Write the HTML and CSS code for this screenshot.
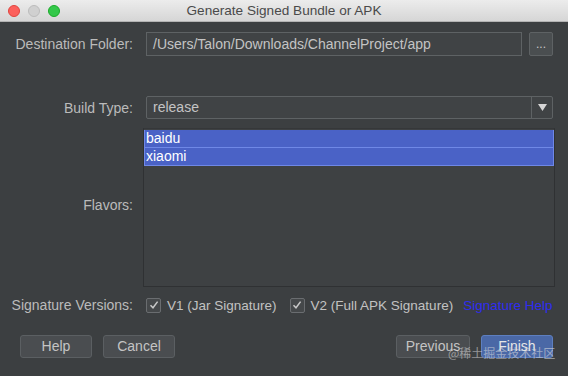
FILE: index.html
```html
<!DOCTYPE html>
<html>
<head>
<meta charset="utf-8">
<link rel="stylesheet" href="styles.css">
</head>
<body>
<div class="window">
  <div class="titlebar">
    <div class="lights">
      <span class="light red"></span>
      <span class="light gray"></span>
      <span class="light green"></span>
    </div>
    <div class="title">Generate Signed Bundle or APK</div>
    <div class="spacer"></div>
  </div>
  <div class="content">
    <div class="row row-dest">
      <div class="label">Destination Folder:</div>
      <div class="field path">/Users/Talon/Downloads/ChannelProject/app</div>
      <div class="browse">...</div>
    </div>
    <div class="row row-build">
      <div class="label">Build Type:</div>
      <div class="combo">
        <div class="combo-text">release</div>
        <div class="combo-arrow"><svg width="9" height="7" viewBox="0 0 9 7"><path d="M0 0H9L4.5 7Z" fill="#d6d6d6"/></svg></div>
      </div>
    </div>
    <div class="row row-flavors">
      <div class="label">Flavors:</div>
      <div class="list">
        <div class="item selected">baidu</div>
        <div class="item selected">xiaomi</div>
      </div>
    </div>
    <div class="row row-sig">
      <div class="label">Signature Versions:</div>
      <div class="checks">
        <label class="check"><span class="box"><svg width="12" height="12" viewBox="0 0 12 12"><path d="M2.5 6.2L5 8.8L9.6 2.6" fill="none" stroke="#c8c8c8" stroke-width="1.5"/></svg></span>V1 (Jar Signature)</label>
        <label class="check"><span class="box"><svg width="12" height="12" viewBox="0 0 12 12"><path d="M2.5 6.2L5 8.8L9.6 2.6" fill="none" stroke="#c8c8c8" stroke-width="1.5"/></svg></span>V2 (Full APK Signature)</label>
        <span class="link">Signature Help</span>
      </div>
    </div>
    <div class="buttons">
      <div class="group">
        <div class="btn">Help</div>
        <div class="btn">Cancel</div>
      </div>
      <div class="group">
        <div class="btn btn-prev">Previous</div>
        <div class="btn primary">Finish</div>
      </div>
    </div>
  </div>
  <div class="watermark">@稀土掘金技术社区</div>
</div>
</body>
</html>
```

FILE: styles.css
```css
* { box-sizing: border-box; }
html, body { margin: 0; padding: 0; }
body {
  width: 568px;
  height: 376px;
  overflow: hidden;
  background: #3c3f41;
  font-family: "Liberation Sans", Arial, sans-serif;
  font-size: 14px;
  color: #bbbbbb;
}
.window { position: relative; width: 568px; height: 376px; background: #3c3f41; }
.titlebar {
  height: 22px;
  background: linear-gradient(#ececec, #d6d6d6);
  border-bottom: 1px solid #b3b3b3;
  display: flex;
  align-items: center;
}
.lights { display: flex; gap: 8px; padding-left: 8px; width: 70px; flex: none; }
.spacer { width: 70px; flex: none; }
.light { width: 12px; height: 12px; border-radius: 50%; display: block; }
.light.red { background: #fc605c; border: 1px solid #e0443e; }
.light.gray { background: #d0d0d0; border: 1px solid #bcbcbc; }
.light.green { background: #34c84a; border: 1px solid #1aab29; }
.title {
  flex: 1;
  text-align: center;
  color: #4a4a4a;
  font-size: 13.6px;
}
.content { padding: 0 15px 0 0; }
.row { display: flex; align-items: center; }
.label { width: 133px; text-align: right; flex: none; margin-right: 13px; position: relative; white-space: nowrap; }
.row-dest { margin-top: 10px; height: 24px; }
.field {
  height: 24px;
  flex: 1;
  border: 1px solid #5e6264;
  background: #404345;
  padding: 0 6px;
  line-height: 22px;
  color: #c4c4c4;
}
.browse {
  width: 24px; height: 24px;
  margin-left: 7px;
  border: 1px solid #5e6264;
  border-radius: 2px;
  background: #4a4e50;
  color: #c8c8c8;
  text-align: center;
  line-height: 22px;
  font-size: 12px;
}
.row-build { margin-top: 40px; height: 23px; }
.combo {
  flex: 1; height: 23px;
  display: flex;
  border: 1px solid #5e6264;
  border-radius: 2px;
  background: #404345;
}
.combo-text { flex: 1; padding: 0 6px; line-height: 21px; color: #c4c4c4; }
.combo-arrow {
  width: 21px;
  border-left: 1px solid #5e6264;
  display: flex; align-items: center; justify-content: center;
}
.row-flavors { margin-top: 9px; height: 159px; }
.row-flavors .label { top: -3px; }
.list {
  flex: 1;
  height: 159px;
  margin-left: -3px;
  margin-right: -2px;
  border: 1px solid #2f3133;
  border-top-color: #353739;
  background: #3e4143;
  padding-top: 1px;
}
.item { height: 18px; line-height: 17px; padding-left: 1px; color: #ffffff; }
.item.selected { background: #4a62c6; border: 1px solid #6f88e6; border-top: none; }
.row-sig { margin-top: 8px; height: 20px; }
.checks { display: flex; align-items: center; flex: 1; white-space: nowrap; font-size: 13.5px; }
.check { display: flex; align-items: center; margin-right: 13px; color: #c2c2c2; flex: none; }
.box {
  width: 15px; height: 15px;
  border: 1px solid #6a6d70;
  border-radius: 2px;
  background: #45484a;
  margin-right: 6px;
  display: flex; align-items: center; justify-content: center;
  flex: none;
}
.link { color: #2f2cf0; margin-left: -3px; flex: none; }
.buttons {
  margin-top: 20px;
  display: flex;
  justify-content: space-between;
  padding-left: 20px;
}
.group { display: flex; gap: 11px; }
.btn {
  width: 72px; height: 23px;
  border: 1px solid #5b5f62;
  border-radius: 3px;
  background: #4a4d50;
  color: #c4c4c4;
  text-align: center;
  line-height: 21px;
}
.btn-prev { width: 74px; }
.primary { background: #4a68a6; border-color: #5d7fc0; color: #e6e6e6; }
.watermark {
  position: absolute;
  left: 448px;
  top: 345px;
  font-family: "Noto Sans CJK SC", sans-serif;
  font-size: 12px;
  line-height: 15px;
  color: rgba(225, 225, 225, 0.55);
}
```
